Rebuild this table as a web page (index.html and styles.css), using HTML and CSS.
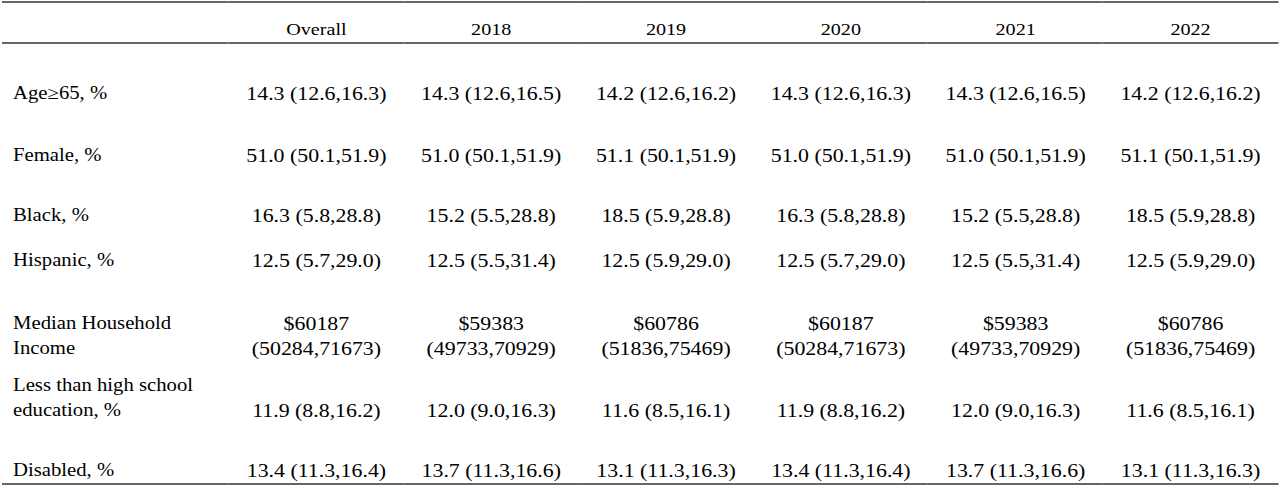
FILE: index.html
```html
<!DOCTYPE html>
<html lang="en">
<head>
<meta charset="utf-8">
<title>Characteristics table</title>
<link rel="stylesheet" href="styles.css">
</head>
<body>
<table class="stats">
  <thead>
    <tr class="head">
      <th class="label"></th>
      <th class="col">Overall</th>
      <th class="col">2018</th>
      <th class="col">2019</th>
      <th class="col">2020</th>
      <th class="col">2021</th>
      <th class="col">2022</th>
    </tr>
  </thead>
  <tbody>
    <tr class="r-age">
      <td class="label">Age≥65, %</td>
      <td class="val">14.3 (12.6,16.3)</td>
      <td class="val">14.3 (12.6,16.5)</td>
      <td class="val">14.2 (12.6,16.2)</td>
      <td class="val">14.3 (12.6,16.3)</td>
      <td class="val">14.3 (12.6,16.5)</td>
      <td class="val">14.2 (12.6,16.2)</td>
    </tr>
    <tr class="r-female">
      <td class="label">Female, %</td>
      <td class="val">51.0 (50.1,51.9)</td>
      <td class="val">51.0 (50.1,51.9)</td>
      <td class="val">51.1 (50.1,51.9)</td>
      <td class="val">51.0 (50.1,51.9)</td>
      <td class="val">51.0 (50.1,51.9)</td>
      <td class="val">51.1 (50.1,51.9)</td>
    </tr>
    <tr class="r-black">
      <td class="label">Black, %</td>
      <td class="val">16.3 (5.8,28.8)</td>
      <td class="val">15.2 (5.5,28.8)</td>
      <td class="val">18.5 (5.9,28.8)</td>
      <td class="val">16.3 (5.8,28.8)</td>
      <td class="val">15.2 (5.5,28.8)</td>
      <td class="val">18.5 (5.9,28.8)</td>
    </tr>
    <tr class="r-hisp">
      <td class="label">Hispanic, %</td>
      <td class="val">12.5 (5.7,29.0)</td>
      <td class="val">12.5 (5.5,31.4)</td>
      <td class="val">12.5 (5.9,29.0)</td>
      <td class="val">12.5 (5.7,29.0)</td>
      <td class="val">12.5 (5.5,31.4)</td>
      <td class="val">12.5 (5.9,29.0)</td>
    </tr>
    <tr class="r-income">
      <td class="label">Median Household Income</td>
      <td class="val">$60187<br>(50284,71673)</td>
      <td class="val">$59383<br>(49733,70929)</td>
      <td class="val">$60786<br>(51836,75469)</td>
      <td class="val">$60187<br>(50284,71673)</td>
      <td class="val">$59383<br>(49733,70929)</td>
      <td class="val">$60786<br>(51836,75469)</td>
    </tr>
    <tr class="r-edu">
      <td class="label">Less than high school education, %</td>
      <td class="val">11.9 (8.8,16.2)</td>
      <td class="val">12.0 (9.0,16.3)</td>
      <td class="val">11.6 (8.5,16.1)</td>
      <td class="val">11.9 (8.8,16.2)</td>
      <td class="val">12.0 (9.0,16.3)</td>
      <td class="val">11.6 (8.5,16.1)</td>
    </tr>
    <tr class="r-dis">
      <td class="label">Disabled, %</td>
      <td class="val">13.4 (11.3,16.4)</td>
      <td class="val">13.7 (11.3,16.6)</td>
      <td class="val">13.1 (11.3,16.3)</td>
      <td class="val">13.4 (11.3,16.4)</td>
      <td class="val">13.7 (11.3,16.6)</td>
      <td class="val">13.1 (11.3,16.3)</td>
    </tr>
  </tbody>
</table>
</body>
</html>
```
FILE: styles.css
```css
html, body {
  margin: 0;
  padding: 0;
  background: #fff;
}

body {
  font-family: "Liberation Serif", "Times New Roman", serif;
  font-size: 18px;
  line-height: 25px;
  color: #000;
}

/* The source table is set in a horizontally stretched Times face;
   the stretch is reproduced with a horizontal scale of the table. */
.stats {
  margin: 1px 0 0 2px;
  width: 1109.57px;
  border-collapse: separate;
  border-spacing: 0;
  table-layout: fixed;
  transform: scaleX(1.15);
  transform-origin: 0 0;
}

.stats th,
.stats td {
  padding: 0;
  vertical-align: bottom;
  font-weight: normal;
}

.stats .label {
  width: 197.4px;
  box-sizing: border-box;
  padding-left: 9.6px;
  padding-right: 12px;
  text-align: left;
  font-size: 18px;
}

.stats .col,
.stats .val {
  text-align: center;
}

.head th {
  border-top: 2px solid #666;
  border-bottom: 2px solid #666;
  padding-top: 14px;
  font-size: 17.5px;
}

.stats .val {
  font-size: 19px;
}

.r-age td { padding-top: 37px; }
.r-female td { padding-top: 37px; }
.r-black td { padding-top: 35px; }
.r-hisp td { padding-top: 20px; }
.r-income td { padding-top: 38px; }
.r-edu td { padding-top: 12px; }
.r-dis td {
  padding-top: 35px;
  border-bottom: 2px solid #666;
}
```
